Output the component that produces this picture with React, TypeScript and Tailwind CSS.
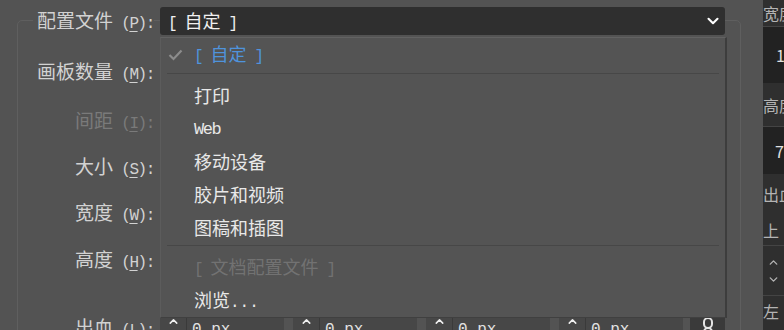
import { ChevronDown, ChevronUp } from "lucide-react";

// Illustrator "新建文档" dialog, profile dropdown open

function Mono({ children, className = "" }: { children: React.ReactNode; className?: string }) {
  return (
    <span className={`font-['Liberation_Mono',monospace] text-[16px] tracking-[-1.4px] whitespace-pre ${className}`}>
      {children}
    </span>
  );
}

function Label({ zh, k, dim, mask }: { zh: string; k: string; dim?: boolean; mask?: boolean }) {
  return (
    <div className="w-[136px] shrink-0 text-right">
      <span
        className={`text-[19px] leading-none whitespace-nowrap ${dim ? "text-[#7a7a7a]" : "text-[#d2d2d2]"} ${
          mask ? "bg-[#535353] pl-[4px]" : ""
        }`}
      >
        {zh}
        <Mono className="tracking-[-0.6px]">
          {" ("}
          <span className="underline underline-offset-[3px]">{k}</span>
          {"):"}
        </Mono>
      </span>
    </div>
  );
}

function Spin() {
  return (
    <div className="w-[124px] h-[28px] flex bg-[#474747] rounded-[2px]">
      <div className="w-[27px] flex flex-col items-center justify-between py-[1px] border-r border-[#3a3a3a]">
        <ChevronUp size={15} strokeWidth={2.8} className="text-[#efefef]" />
        <ChevronDown size={15} strokeWidth={2.8} className="text-[#efefef]" />
      </div>
      <div className="flex items-center pl-[5px] pt-[3px] font-['Liberation_Mono',monospace] text-[16px] text-[#e2e2e2]">0 px</div>
    </div>
  );
}

const items = ["打印", "Web", "移动设备", "胶片和视频", "图稿和插图"];

export default function App() {
  return (
    <div className="w-[784px] h-[330px] overflow-hidden bg-[#535353] flex font-['Noto_Sans_CJK_SC',sans-serif]">
      {/* left: document settings */}
      <div className="relative w-[763px] shrink-0 pl-[17px] pt-[20px]">
        <div className="w-[724px] h-[400px] border border-[#5f5f5f] rounded-t-[5px] flex flex-col">
          <div className="-mt-[14px] h-[28px] flex items-center gap-[6px]">
            <Label zh="配置文件" k="P" mask />
            <div className="w-[565px] h-[28px] bg-[#2f2f2f] rounded-[3px] flex items-center justify-between pl-[8px] pr-[3px]">
              <span className="text-[18px] text-[#f0f0f0] leading-none">
                <Mono>[ </Mono>自定<Mono> ]</Mono>
              </span>
              <ChevronDown size={18} strokeWidth={2.8} className="text-white" />
            </div>
          </div>
          <div className="mt-[23px] h-[28px] flex items-center">
            <Label zh="画板数量" k="M" />
          </div>
          <div className="mt-[21px] h-[28px] flex items-center">
            <Label zh="间距" k="I" dim />
          </div>
          <div className="mt-[18px] h-[28px] flex items-center">
            <Label zh="大小" k="S" />
          </div>
          <div className="mt-[18px] h-[28px] flex items-center">
            <Label zh="宽度" k="W" />
          </div>
          <div className="mt-[19px] h-[28px] flex items-center">
            <Label zh="高度" k="H" />
          </div>
          <div className="mt-[40px] h-[28px] flex items-center gap-[6px]">
            <Label zh="出血" k="L" />
            <div className="flex gap-[9px]">
              <Spin />
              <Spin />
              <Spin />
              <Spin />
            </div>
            <div className="ml-[1px] w-[35px] h-[28px] bg-[#3a3a3a] flex justify-center pt-[3px]">
              <svg width="14" height="22" viewBox="0 0 14 22" fill="none" stroke="#e4e4e4" strokeWidth="2">
                <rect x="3" y="1" width="8" height="10" rx="4" />
                <rect x="3" y="11" width="8" height="10" rx="4" />
              </svg>
            </div>
          </div>
        </div>

        {/* open profile menu */}
        <div className="absolute left-[160px] top-[37px] w-[567px] h-[281px] bg-[#545454] border-t border-t-[#626262] border-l border-l-[#5c5c5c] border-r-2 border-r-[#3d3d3d] border-b border-b-[#404040] text-[18px] text-[#e8e8e8]">
          <div className="h-[33px] flex items-center pl-[7px]">
            <div className="w-[26px]">
              <svg width="15" height="12" viewBox="0 0 15 12" fill="none" stroke="#8c8c8c" strokeWidth="2.2">
                <polyline points="1.5,6 5.5,10 13.5,1.5" />
              </svg>
            </div>
            <span className="text-[#4f93dc] leading-none">
              <Mono>[ </Mono>自定<Mono> ]</Mono>
            </span>
          </div>
          <div className="mx-[6px] mt-[2px] mb-[4px] h-px bg-[#474747]" />
          {items.map((t) => (
            <div key={t} className="h-[33px] flex items-center pl-[33px] leading-none">
              <span>{t === "Web" ? <Mono className="text-[17px]">Web</Mono> : t}</span>
            </div>
          ))}
          <div className="mx-[6px] mt-[2px] mb-[5px] h-px bg-[#474747]" />
          <div className="h-[33px] flex items-center pl-[33px] text-[#727272] leading-none">
            <span>
              <Mono>[ </Mono>文档配置文件<Mono> ]</Mono>
            </span>
          </div>
          <div className="h-[33px] flex items-center pl-[33px] leading-none">
            <span>
              浏览<Mono className="tracking-[0px]">...</Mono>
            </span>
          </div>
        </div>
      </div>

      {/* right: side panel, cut off */}
      <div className="flex-1 overflow-hidden whitespace-nowrap bg-[#2f2f2f] text-[16px] text-[#b4b4b4] flex flex-col leading-none">
        <div className="h-[27px] flex items-center border-b border-[#444]">宽度</div>
        <div className="h-[56px] bg-[#222] flex items-center pl-[13px] text-[#e0e0e0]">1</div>
        <div className="h-[44px] flex items-center border-b border-[#444]">高度</div>
        <div className="h-[47px] bg-[#222] flex items-center pl-[12px] text-[#e0e0e0]">7</div>
        <div className="h-[40px] flex items-center">出血</div>
        <div className="h-[32px] flex items-center border-b border-[#444]">上</div>
        <div className="h-[50px] flex flex-col items-center justify-center gap-[4px] border-b border-[#444]">
          <ChevronUp size={13} strokeWidth={2.5} />
          <ChevronDown size={13} strokeWidth={2.5} />
        </div>
        <div className="h-[30px] flex items-center">左</div>
      </div>
    </div>
  );
}
